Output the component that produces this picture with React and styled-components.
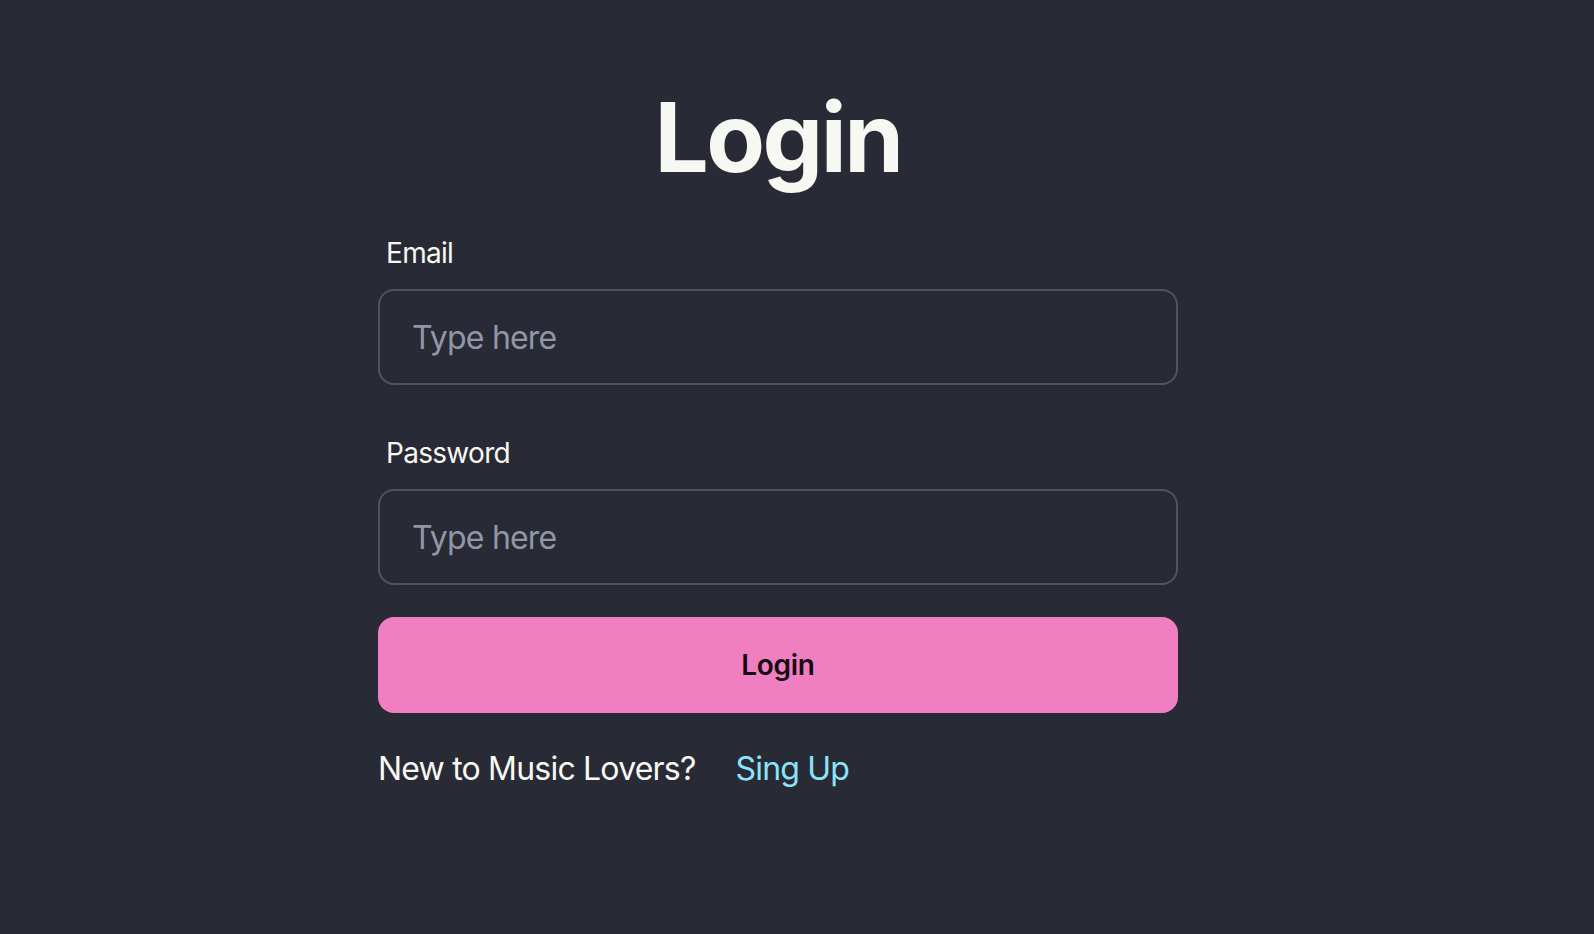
import React from "react";
import styled, { createGlobalStyle } from "styled-components";

const GlobalStyle = createGlobalStyle`
  html, body {
    margin: 0;
    padding: 0;
    background: #282a36;
  }
  body {
    font-family: Inter, "Noto Sans", "Liberation Sans", sans-serif;
    color: #f8f8f2;
  }
  * { box-sizing: border-box; }
`;

const Page = styled.main`
  min-height: 100vh;
  display: flex;
  flex-direction: column;
  align-items: center;
  padding: 89px 38px 0 0;
`;

const Title = styled.h1`
  margin: 0;
  font-size: 96px;
  line-height: 1;
  font-weight: 700;
  color: #f8f8f2;
  letter-spacing: -2.5px;
`;

const Form = styled.form`
  width: 800px;
  margin-top: 32px;
  display: flex;
  flex-direction: column;
`;

const Field = styled.div`
  display: flex;
  flex-direction: column;
  margin-top: ${(p) => (p.$first ? "0" : "32px")};
`;

const Label = styled.label`
  padding: 16px 8px;
  font-size: 28px;
  line-height: 40px;
  letter-spacing: -0.7px;
  color: #f8f8f2;
`;

const Input = styled.input`
  height: 96px;
  width: 100%;
  padding: 0 32px;
  border: 2px solid #51535d;
  border-radius: 16px;
  background: transparent;
  color: #f8f8f2;
  font-family: inherit;
  font-size: 32px;
  letter-spacing: -0.8px;
  outline: none;
  &::placeholder {
    color: #9296a5;
  }
`;

const Button = styled.button`
  margin-top: 32px;
  height: 96px;
  width: 100%;
  border: none;
  border-radius: 16px;
  background: #f07fc2;
  color: #160a12;
  font-family: inherit;
  font-size: 28px;
  font-weight: 600;
  letter-spacing: -0.3px;
  cursor: pointer;
`;

const Footer = styled.p`
  margin: 32px 0 0;
  font-size: 32px;
  line-height: 48px;
  letter-spacing: -0.8px;
  color: #f8f8f2;
`;

const SignUp = styled.a`
  margin-left: 40px;
  color: #8de3f8;
  text-decoration: none;
  cursor: pointer;
`;

export default function App() {
  return (
    <>
      <GlobalStyle />
      <Page>
        <Title>Login</Title>
        <Form onSubmit={(e) => e.preventDefault()}>
          <Field $first>
            <Label htmlFor="email">Email</Label>
            <Input id="email" type="email" placeholder="Type here" />
          </Field>
          <Field>
            <Label htmlFor="password">Password</Label>
            <Input id="password" type="password" placeholder="Type here" />
          </Field>
          <Button type="submit">Login</Button>
          <Footer>
            New to Music Lovers?
            <SignUp>Sing Up</SignUp>
          </Footer>
        </Form>
      </Page>
    </>
  );
}
